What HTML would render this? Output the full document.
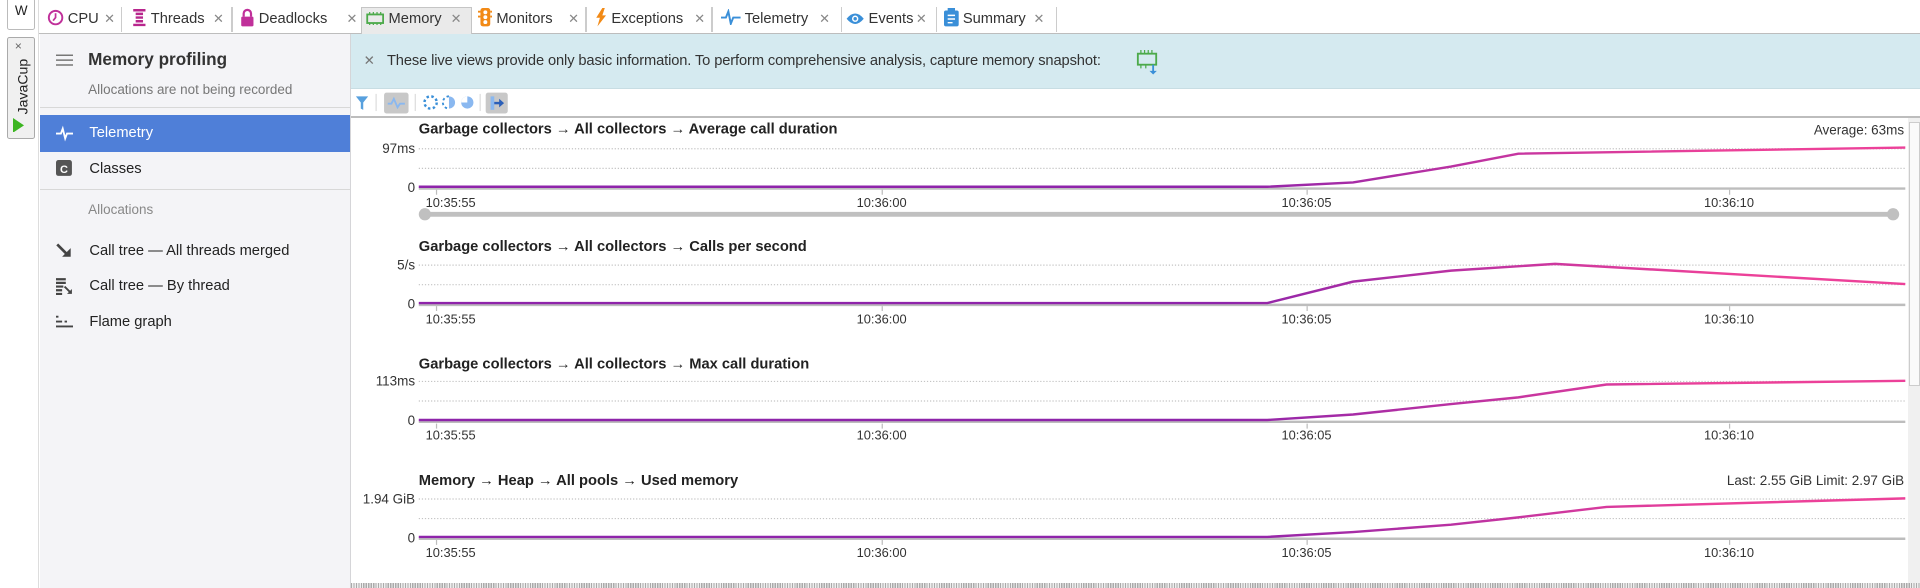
<!DOCTYPE html>
<html><head><meta charset="utf-8">
<style>
html,body{margin:0;padding:0;}
body{width:1568px;height:480px;zoom:1.22449;overflow:hidden;position:relative;background:#fff;font-family:"Liberation Sans",sans-serif;color:#222;}
.abs{position:absolute;}
.tab{position:absolute;top:4px;height:23px;font-size:12px;line-height:23px;color:#333;white-space:nowrap;}
.tab .x{color:#888;font-size:10.5px;position:absolute;top:0;}
.sep{position:absolute;top:6px;width:1px;height:20px;background:#ccc;}
.side{position:absolute;left:33px;top:28px;width:253px;height:452px;background:#f4f4f7;border-right:1px solid #d5d5d8;}
.item{position:absolute;left:0;width:253px;height:28px;font-size:12px;line-height:28px;}
.item span.t{position:absolute;left:40px;}
.ic{position:absolute;left:13px;top:7px;width:14px;height:14px;}
</style></head><body>
<!-- left strip -->
<div class="abs" style="left:0;top:0;width:31px;height:480px;background:#fff;border-right:1px solid #ddd;"></div>
<div class="abs" style="left:6px;top:-2px;width:21px;height:25px;border:1px solid #bbb;border-radius:2px;background:#fff;font-size:11px;text-align:center;line-height:20px;">W</div>
<div class="abs" style="left:6px;top:30px;width:21px;height:82px;border:1px solid #aaa;border-radius:2px;background:#f0f0f0;"></div>
<div class="abs" style="left:12px;top:32px;font-size:10px;color:#666;">×</div>
<div class="abs" style="left:3px;top:72px;font-size:11.5px;transform:rotate(-90deg);transform-origin:center;width:30px;text-align:center;">JavaCup</div>
<svg class="abs" style="left:11px;top:96px" width="10" height="12"><path d="M0 0L9 6L0 12Z" fill="#3cb521"/></svg>

<!-- tab bar -->
<div class="abs" style="left:32px;top:27px;width:1536px;height:1px;background:#bdbdbd;"></div>
<div class="abs" style="left:295px;top:6px;width:89px;height:21px;background:#eaeaea;border:1px solid #c5c5c5;border-bottom:none;"></div>
<div class="tab" style="left:38px"><svg style="vertical-align:-3px" width="14" height="14"><circle cx="7" cy="7" r="5.5" fill="none" stroke="#c0309a" stroke-width="1.6"/><path d="M7 3.5V7L5 9.5" stroke="#c0309a" stroke-width="1.4" fill="none"/></svg> CPU<span class="x" style="left:47px">✕</span></div>
<div class="sep" style="left:99px"></div>
<div class="tab" style="left:108px"><svg style="vertical-align:-3px" width="12" height="14"><path d="M1 1h10M3 4h6M3 7h6M3 10h6M1 13h10" stroke="#b8268d" stroke-width="2"/></svg> Threads<span class="x" style="left:66px">✕</span></div>
<div class="sep" style="left:189px"></div>
<div class="tab" style="left:196px"><svg style="vertical-align:-3px" width="12" height="15"><path d="M3 7V4.5a3 3 0 0 1 6 0V7" stroke="#c0309a" stroke-width="1.8" fill="none"/><rect x="1" y="7" width="10" height="8" rx="1" fill="#c0309a"/></svg> Deadlocks<span class="x" style="left:87px">✕</span></div>
<div class="tab" style="left:299px"><svg style="vertical-align:-2px" width="15" height="11"><rect x="1" y="2" width="13" height="7" fill="none" stroke="#4caa4a" stroke-width="1.5"/><path d="M3 0v2M6 0v2M9 0v2M12 0v2M3 9v2M6 9v2M9 9v2M12 9v2" stroke="#4caa4a"/></svg> Memory<span class="x" style="left:69px">✕</span></div>
<div class="tab" style="left:390px"><svg style="vertical-align:-3px" width="12" height="15"><rect x="2" y="0" width="8" height="15" rx="2" fill="#f28a16"/><circle cx="6" cy="3.5" r="1.6" fill="#fff"/><circle cx="6" cy="7.5" r="1.6" fill="#fff"/><circle cx="6" cy="11.5" r="1.6" fill="#fff"/><path d="M0 3h2M0 7h2M10 3h2M10 7h2" stroke="#f28a16" stroke-width="1.5"/></svg> Monitors<span class="x" style="left:74px">✕</span></div>
<div class="sep" style="left:478px"></div>
<div class="tab" style="left:486px"><svg style="vertical-align:-3px" width="10" height="15"><path d="M6 0L1 8h3l-2 7 7-9H6l2-6z" fill="#f28a16"/></svg> Exceptions<span class="x" style="left:81px">✕</span></div>
<div class="sep" style="left:581px"></div>
<div class="tab" style="left:589px"><svg style="vertical-align:-2px" width="16" height="13"><path d="M0 7h4l2-5 2 10 2-5h6" stroke="#3a8fd8" stroke-width="1.6" fill="none"/></svg> Telemetry<span class="x" style="left:80px">✕</span></div>
<div class="sep" style="left:687px"></div>
<div class="tab" style="left:691px"><svg style="vertical-align:-2px" width="15" height="11"><path d="M0.5 5.5Q7.5 -3 14.5 5.5Q7.5 14 0.5 5.5Z" fill="#3a8fd8"/><circle cx="7.5" cy="5.5" r="2.6" fill="#fff"/><circle cx="7.5" cy="5.5" r="1.4" fill="#3a8fd8"/></svg> Events<span class="x" style="left:57px">✕</span></div>
<div class="sep" style="left:764px"></div>
<div class="tab" style="left:771px"><svg style="vertical-align:-3px" width="12" height="15"><rect x="0" y="2" width="12" height="13" rx="1.5" fill="#3a8fd8"/><rect x="3" y="0" width="6" height="3" fill="#3a8fd8"/><path d="M3 6h6M3 9h6M3 12h4" stroke="#fff" stroke-width="1.2"/></svg> Summary<span class="x" style="left:73px">✕</span></div>
<div class="sep" style="left:862px"></div>

<!-- sidebar -->
<div class="side">
  <svg class="abs" style="left:13px;top:16px" width="14" height="10"><path d="M0 1h14M0 5h14M0 9h14" stroke="#777" stroke-width="1.2"/></svg>
  <div class="abs" style="left:39px;top:12px;font-size:14px;font-weight:bold;color:#333;">Memory profiling</div>
  <div class="abs" style="left:39px;top:39px;font-size:11px;color:#777;">Allocations are not being recorded</div>
  <div class="abs" style="left:0;top:59px;width:253px;height:1px;background:#d8d8d8;"></div>
  <div class="item" style="top:66px;height:30px;line-height:30px;background:#4f7fd8;color:#fff;"><svg class="ic" style="top:8px" viewBox="0 0 14 14"><path d="M0 7h4l1.5-4 2 8 1.5-4h5" stroke="#fff" stroke-width="1.5" fill="none"/></svg><span class="t">Telemetry</span></div>
  <div class="item" style="top:96px"><svg class="ic" viewBox="0 0 14 14"><rect width="13" height="13" rx="2" fill="#555"/><text x="6.5" y="10.5" font-size="9" font-weight="bold" fill="#fff" text-anchor="middle" font-family="Liberation Sans">C</text></svg><span class="t">Classes</span></div>
  <div class="abs" style="left:0;top:126px;width:253px;height:1px;background:#d8d8d8;"></div>
  <div class="abs" style="left:39px;top:137px;font-size:11px;color:#888;">Allocations</div>
  <div class="item" style="top:163px"><svg class="ic" viewBox="0 0 14 14"><path d="M1 2l9 9" stroke="#444" stroke-width="2.2"/><path d="M5 12h7V5z" fill="#444"/></svg><span class="t">Call tree — All threads merged</span></div>
  <div class="item" style="top:192px"><svg class="ic" viewBox="0 0 14 14"><path d="M0 1h8M0 4h8M0 7h6M0 10h5M0 13h5" stroke="#444" stroke-width="1.8"/><path d="M7 7l5 5" stroke="#444" stroke-width="1.5"/><path d="M9 13h4V9z" fill="#444"/></svg><span class="t">Call tree — By thread</span></div>
  <div class="item" style="top:221px"><svg class="ic" viewBox="0 0 14 14"><path d="M0 3h2M0 7h5M7 7h2M0 11h14" stroke="#444" stroke-width="1.5"/><path d="M8 11h1" stroke="#444"/></svg><span class="t">Flame graph</span></div>
</div>

<!-- banner -->
<div class="abs" style="left:287px;top:28px;width:1281px;height:44px;background:#d5eaf0;border-bottom:1px solid #c8dde3;"></div>
<div class="abs" style="left:297px;top:43px;font-size:11px;color:#777;">✕</div>
<div class="abs" style="left:316px;top:43px;font-size:12px;color:#333;letter-spacing:-0.1px;white-space:nowrap;">These live views provide only basic information. To perform comprehensive analysis, capture memory snapshot:</div>
<svg class="abs" style="left:928px;top:41px" width="20" height="22"><rect x="1.5" y="3" width="15" height="9" fill="none" stroke="#4caa4a" stroke-width="1.5"/><path d="M4 0v3M7 0v3M10 0v3M13 0v3M4 12v3M8 12v3" stroke="#4caa4a"/><path d="M14 12v6" stroke="#3a8fd8" stroke-width="1.5"/><path d="M11 17h6l-3 3z" fill="#3a8fd8"/></svg>

<!-- toolbar -->
<svg class="abs" style="left:287px;top:73px" width="140" height="22">
<path d="M4 6h10l-4 5v6l-2-1v-5z" fill="#3a8fd8" opacity="0.85"/>
<path d="M20.5 4v14" stroke="#ddd"/>
<rect x="27" y="3" width="20" height="17" rx="2" fill="#c8c8c8"/>
<path d="M30 12h3l2-4 3 7 2-3h4" stroke="#8ab8f0" stroke-width="1.5" fill="none"/>
<path d="M52.5 4v14" stroke="#ddd"/>
<circle cx="65" cy="11" r="5" fill="none" stroke="#3a8fd8" stroke-width="2" stroke-dasharray="2 2"/>
<path d="M80 6a5 5 0 0 1 0 10z" fill="#8ab8f0"/><path d="M80 6a5 5 0 0 0 0 10" fill="none" stroke="#3a8fd8" stroke-width="1.5" stroke-dasharray="2 2"/>
<circle cx="95" cy="11" r="5" fill="#8ab8f0"/><path d="M95 11V6a5 5 0 0 0-5 5z" fill="#fff"/>
<path d="M105.5 4v14" stroke="#ddd"/>
<rect x="110" y="3" width="18" height="17" rx="2" fill="#c8c8c8"/>
<rect x="114" y="6" width="3" height="11" fill="#8ab8f0"/><path d="M117 11.5h6" stroke="#2b5fb8" stroke-width="2"/><path d="M121 8l4 3.5-4 3.5z" fill="#2b5fb8"/>
</svg>
<div class="abs" style="left:287px;top:95px;width:1281px;height:1px;background:#bdbdbd;"></div>

<!-- charts -->
<svg class="abs" style="left:0;top:0" width="1568" height="480" font-family="Liberation Sans">
<defs>
<linearGradient id="g" gradientUnits="userSpaceOnUse" x1="1000" y1="0" x2="1400" y2="0"><stop offset="0" stop-color="#8e24aa"/><stop offset="1" stop-color="#ec4199"/></linearGradient>
</defs>
<g font-size="12" font-weight="bold" fill="#222">
<text x="342" y="109">Garbage collectors → All collectors → Average call duration</text>
<text x="342" y="205">Garbage collectors → All collectors → Calls per second</text>
<text x="342" y="301">Garbage collectors → All collectors → Max call duration</text>
<text x="342" y="396">Memory → Heap → All pools → Used memory</text>
</g>
<g font-size="11" fill="#333" text-anchor="end">
<text x="1555" y="110">Average: 63ms</text>
<text x="1555" y="396">Last: 2.55 GiB   Limit: 2.97 GiB</text>
<text x="339" y="125">97ms</text><text x="339" y="157">0</text>
<text x="339" y="220">5/s</text><text x="339" y="252">0</text>
<text x="339" y="315">113ms</text><text x="339" y="347">0</text>
<text x="339" y="411">1.94 GiB</text><text x="339" y="443">0</text>
</g>
<g stroke="#c4c4c4" stroke-dasharray="1 1.5" stroke-width="1">
<path d="M342 121.5H1556M342 137.5H1556M342 216.5H1556M342 232.5H1556M342 311.5H1556M342 327.5H1556M342 407.5H1556M342 423.5H1556"/>
</g>
<g stroke="#bdbdbd" stroke-width="2">
<path d="M342 154H1556M342 249H1556M342 344.5H1556M342 440H1556"/>
</g>
<g stroke="#bdbdbd" stroke-width="1">
<path d="M356.5 155v4M720.5 155v4M1067.5 155v4M1412.5 155v4"/>
<path d="M356.5 250v4M720.5 250v4M1067.5 250v4M1412.5 250v4"/>
<path d="M356.5 346v4M720.5 346v4M1067.5 346v4M1412.5 346v4"/>
<path d="M356.5 441v4M720.5 441v4M1067.5 441v4M1412.5 441v4"/>
</g>
<g font-size="10.5" fill="#333" text-anchor="middle">
<text x="368" y="169">10:35:55</text><text x="720" y="169">10:36:00</text><text x="1067" y="169">10:36:05</text><text x="1412" y="169">10:36:10</text>
<text x="368" y="264">10:35:55</text><text x="720" y="264">10:36:00</text><text x="1067" y="264">10:36:05</text><text x="1412" y="264">10:36:10</text>
<text x="368" y="359">10:35:55</text><text x="720" y="359">10:36:00</text><text x="1067" y="359">10:36:05</text><text x="1412" y="359">10:36:10</text>
<text x="368" y="455">10:35:55</text><text x="720" y="455">10:36:00</text><text x="1067" y="455">10:36:05</text><text x="1412" y="455">10:36:10</text>
</g>
<path d="M347 175H1546" stroke="#c0c0c0" stroke-width="4"/>
<circle cx="347" cy="175" r="5" fill="#c0c0c0"/><circle cx="1546" cy="175" r="5" fill="#c0c0c0"/>
<g fill="none" stroke="url(#g)" stroke-width="2">
<path d="M342 152.5H1035L1105 149L1185 136L1240 125.5L1556 120.5"/>
<path d="M342 247.5H1035L1105 230L1185 221L1270 215.5L1556 232"/>
<path d="M342 343H1035L1105 338.5L1185 330L1240 324.5L1312 314L1556 311"/>
<path d="M342 438.5H1035L1105 434.5L1185 428.5L1240 422.5L1312 414L1556 407"/>
</g>
</svg>

<!-- scrollbar -->
<div class="abs" style="left:1558px;top:96px;width:10px;height:380px;background:#f0f0f0;"></div>
<div class="abs" style="left:1559px;top:100px;width:7px;height:214px;background:#fafafa;border:1px solid #ccc;"></div>
<div class="abs" style="left:287px;top:476px;width:1281px;height:4px;background:repeating-linear-gradient(90deg,#aaa 0 1px,#eee 1px 2px);"></div>
</body></html>
